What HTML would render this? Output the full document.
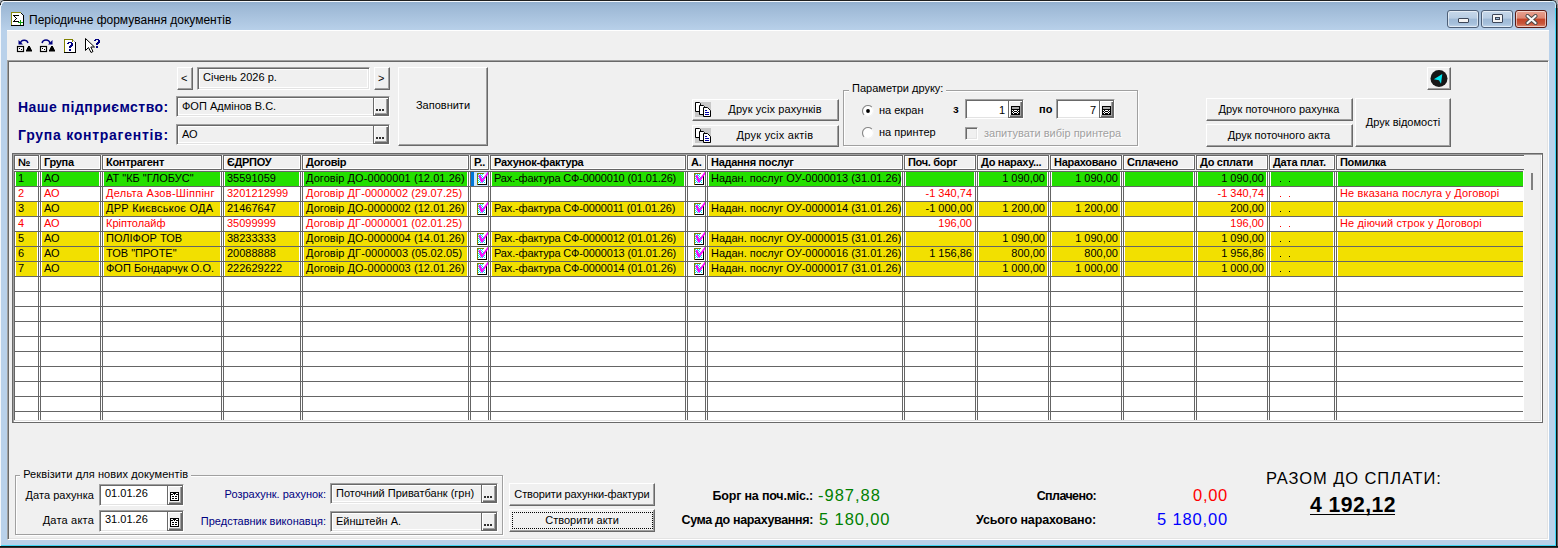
<!DOCTYPE html><html><head><meta charset="utf-8"><style>

html,body{margin:0;padding:0;}
body{width:1558px;height:548px;overflow:hidden;position:relative;background:#b9d1ea;font-family:"Liberation Sans", sans-serif;}
div{position:absolute;box-sizing:border-box;}
.t{white-space:nowrap;font-size:11px;line-height:13px;color:#000;}
svg{position:absolute;}

</style></head><body>
<div class="" style="left:0px;top:0px;width:1558px;height:548px;background:#b9d1ea"></div>
<div class="" style="left:1px;top:2px;width:1555px;height:29px;background:linear-gradient(#92afce 0%,#9db8d5 15%,#b9d1ea 100%)"></div>
<div class="" style="left:5px;top:0px;width:1547px;height:1px;background:#1f1f1f"></div>
<div class="" style="left:5px;top:1px;width:1547px;height:1px;background:#f4f7fb"></div>
<div class="" style="left:0px;top:6px;width:1px;height:540px;background:#f4f7fb"></div>
<div class="" style="left:1556px;top:8px;width:1px;height:540px;background:#101010"></div>
<div class="" style="left:1557px;top:8px;width:1px;height:540px;background:#5a5a5a"></div>
<div class="" style="left:1555px;top:8px;width:1px;height:538px;background:#3fd6f5"></div>
<div class="" style="left:0px;top:546px;width:1558px;height:1px;background:#101010"></div>
<div class="" style="left:0px;top:547px;width:1558px;height:1px;background:#303030"></div>
<div class="" style="left:1px;top:545px;width:1555px;height:1px;background:#3fd6f5"></div>
<div class="" style="left:7px;top:30px;width:1542px;height:1px;background:#ffffff"></div>
<svg style="left:0px;top:0px" width="6" height="6" viewBox="0 0 6 6"><path d="M0 0 H4 A4 4 0 0 0 0 4 Z" fill="#b4b4b4"/><path d="M0.5 5 V4 A3.5 3.5 0 0 1 4 0.5 H6" fill="none" stroke="#1f1f1f" stroke-width="1"/><path d="M1.5 6 V4.5 A3 3 0 0 1 4.5 1.5 H6" fill="none" stroke="#f4f7fb" stroke-width="1"/><path d="M1.5 6 V4.5 A3 3 0 0 1 4.5 1.5 H6" fill="none" stroke="#f4f7fb" stroke-width="1"/></svg>
<svg style="left:1550px;top:0px" width="8" height="8" viewBox="0 0 8 8"><path d="M2 0 H8 V6 A6 6 0 0 0 2 0 Z" fill="#b4b4b4"/><path d="M0 0.5 H2.5 A4 4 0 0 1 6.5 4.5 V8" fill="none" stroke="#1f1f1f" stroke-width="1"/><path d="M0 1.5 H2.5 A3 3 0 0 1 5.5 4.5 V8" fill="none" stroke="#c8eefa" stroke-width="1"/><rect x="7" y="4" width="1" height="4" fill="#8a8a8a"/></svg>
<svg style="left:11px;top:12px" width="13" height="14" viewBox="0 0 13 14" shape-rendering="crispEdges">
<path d="M1 1 H9 L12 4 V13 H1 Z" fill="#fff"/>
<rect x="0" y="0" width="1" height="14" fill="#8a8a10"/><rect x="0" y="0" width="10" height="1" fill="#8a8a10"/>
<rect x="12" y="3" width="1" height="11" fill="#000"/><rect x="0" y="13" width="13" height="1" fill="#000"/>
<rect x="9" y="0" width="1" height="1" fill="#8a8a10"/><rect x="10" y="1" width="1" height="1" fill="#000"/><rect x="11" y="2" width="1" height="1" fill="#000"/>
<path d="M2 3h6v1h-4v1h1v1h1v1h-1v1h-1v1h4v1h-6v-1h1v-1h1v-1h1v-1h-1v-1h-1v-1h-1z" fill="#000"/>
<path d="M9 8h1v2h2v1h-2v2h-1v-2h-2v-1h2z" fill="#10a010"/>
</svg>
<div class="t" style="left:29px;top:13px;font-size:12px;line-height:15px;color:#000">Періодичне формування документів</div>
<div style="left:1447px;top:10px;width:32px;height:18px;border:1px solid #4d5f77;border-radius:3px;background:linear-gradient(#c6d8ea 0%,#b8cde3 45%,#9eb9d6 50%,#a6c0db 80%,#c0d6ec 100%);box-shadow:inset 0 0 0 1px rgba(255,255,255,0.55)"><div style="left:10px;top:7px;width:11px;height:5px;background:#f4f4f4;border:1px solid #3c4658;border-radius:1px"></div></div>
<div style="left:1481px;top:10px;width:32px;height:18px;border:1px solid #4d5f77;border-radius:3px;background:linear-gradient(#c6d8ea 0%,#b8cde3 45%,#9eb9d6 50%,#a6c0db 80%,#c0d6ec 100%);box-shadow:inset 0 0 0 1px rgba(255,255,255,0.55)"><div style="left:10px;top:3px;width:11px;height:9px;background:#f4f4f4;border:1px solid #3c4658;border-radius:1px"><div style="left:2px;top:2px;width:5px;height:3px;background:#9eb9d6;border:1px solid #3c4658"></div></div></div>
<div style="left:1515px;top:10px;width:32px;height:18px;border:1px solid #5a1a14;border-radius:3px;background:linear-gradient(#e8a291 0%,#dd8672 45%,#c44428 50%,#c8573c 80%,#e0907a 100%);box-shadow:inset 0 0 0 1px rgba(255,255,255,0.55)"><svg style="left:9px;top:3px" width="13" height="11" viewBox="0 0 13 11"><path d="M2.5 2 L10.5 9 M10.5 2 L2.5 9" stroke="#474747" stroke-width="4" stroke-linecap="round"/><path d="M2.5 2 L10.5 9 M10.5 2 L2.5 9" stroke="#f8f8f8" stroke-width="2.2" stroke-linecap="round"/></svg></div>
<div class="" style="left:7px;top:31px;width:1542px;height:509px;background:#f0f0f0"></div>
<svg style="left:16px;top:38px" width="18" height="16" viewBox="0 0 18 16">
<rect x="1.5" y="8.5" width="6" height="5" fill="#fff" stroke="#000" stroke-width="1.2"/>
<rect x="3" y="10" width="1" height="1" fill="#000"/><rect x="5" y="11" width="1" height="1" fill="#000"/>
<path d="M12 8 h2 v1.5 h1 v2 h1 v2 h-6 v-2 h1 v-2 h1 z" fill="#000"/>
<path d="M4.5 5 C5 1.5 11 1 12 5" fill="none" stroke="#000080" stroke-width="1.4"/>
<path d="M2.5 2 L2.5 6.5 L7 6.5 Z" fill="#000080"/>
</svg>
<svg style="left:39px;top:38px" width="18" height="16" viewBox="0 0 18 16">
<rect x="1.5" y="8.5" width="6" height="5" fill="#fff" stroke="#000" stroke-width="1.2"/>
<rect x="3" y="10" width="1" height="1" fill="#000"/><rect x="5" y="11" width="1" height="1" fill="#000"/>
<path d="M12 8 h2 v1.5 h1 v2 h1 v2 h-6 v-2 h1 v-2 h1 z" fill="#000"/>
<path d="M3 5 C4 1 10 1 11 5" fill="none" stroke="#000080" stroke-width="1.4"/>
<path d="M13.5 2 L13.5 6.5 L9 6.5 Z" fill="#000080"/>
</svg>
<svg style="left:63px;top:39px" width="14" height="15" viewBox="0 0 14 15" shape-rendering="crispEdges">
<path d="M1 1 H9 L12 4 V13 H1 Z" fill="#fff"/>
<rect x="1" y="0" width="1" height="14" fill="#808000"/><rect x="1" y="0" width="9" height="1" fill="#808000"/><rect x="9" y="0" width="1" height="3" fill="#808000"/>
<rect x="12" y="3" width="1" height="11" fill="#000"/><rect x="1" y="13" width="12" height="1" fill="#000"/>
<rect x="10" y="1" width="1" height="1" fill="#a0a0a0"/><rect x="11" y="2" width="1" height="1" fill="#a0a0a0"/>
<path transform="translate(4,3)" d="M1 0h4v1h1v3h-1v1h-1v1h-2v-2h1v-1h1v-2h-2v1h-2v-1h1zM2 7h2v2h-2z" fill="#000080"/>
</svg>
<svg style="left:85px;top:38px" width="17" height="16" viewBox="0 0 17 16" shape-rendering="crispEdges">
<path d="M0.5 0.5 V12.5 L3.5 9.5 L6 14.5 L8 13.5 L5.8 9 L9.5 9 Z" fill="#fff" stroke="#000" stroke-width="1" shape-rendering="geometricPrecision"/>
<path transform="translate(9,1)" d="M1 0h4v1h1v3h-1v1h-1v1h-2v-2h1v-1h1v-2h-2v1h-2v-1h1zM2 7h2v2h-2z" fill="#000080"/>
</svg>
<div class="" style="left:7px;top:60px;width:1542px;height:480px;background:#f0f0f0;border-top:1px solid #a0a0a0;border-left:1px solid #a0a0a0;border-right:1px solid #ffffff;border-bottom:1px solid #ffffff;box-shadow:inset 1px 1px 0 #696969, inset -1px -1px 0 #e3e3e3"></div>
<div class="" style="left:177px;top:67px;width:16px;height:23px;background:#f0f0f0;border-top:1px solid #ffffff;border-left:1px solid #ffffff;border-right:1px solid #696969;border-bottom:1px solid #696969;box-shadow:inset -1px -1px 0 #a0a0a0;"></div>
<div class="t" style="left:181px;top:72px;font-size:11px">&lt;</div>
<div class="" style="left:197px;top:67px;width:173px;height:23px;background:#f0f0f0;border-top:1px solid #a0a0a0;border-left:1px solid #a0a0a0;border-right:1px solid #ffffff;border-bottom:1px solid #ffffff;box-shadow:inset 1px 1px 0 #696969, inset -1px -1px 0 #e3e3e3, inset 2px 2px 0 #fff, inset -2px -2px 0 #fff;"></div>
<div class="t" style="left:203px;top:71px;">Січень 2026 р.</div>
<div class="" style="left:374px;top:67px;width:16px;height:23px;background:#f0f0f0;border-top:1px solid #ffffff;border-left:1px solid #ffffff;border-right:1px solid #696969;border-bottom:1px solid #696969;box-shadow:inset -1px -1px 0 #a0a0a0;"></div>
<div class="t" style="left:378px;top:72px;font-size:11px">&gt;</div>
<div class="" style="left:176px;top:96px;width:214px;height:21px;background:#f0f0f0;border-top:1px solid #a0a0a0;border-left:1px solid #a0a0a0;border-right:1px solid #ffffff;border-bottom:1px solid #ffffff;box-shadow:inset 1px 1px 0 #696969, inset -1px -1px 0 #e3e3e3, inset 2px 2px 0 #fff, inset -2px -2px 0 #fff;"></div><div class="t" style="left:182px;top:100px;">ФОП Адмінов В.С.</div><div class="" style="left:373px;top:97px;width:16px;height:19px;background:#f0f0f0;border:1px solid #696969;box-shadow:inset 1px 1px 0 #fff, inset -1px -1px 0 #696969, inset -2px -2px 0 #a0a0a0"></div><div class="" style="left:376px;top:109px;width:2px;height:2px;background:#303030"></div><div class="" style="left:379px;top:109px;width:2px;height:2px;background:#303030"></div><div class="" style="left:382px;top:109px;width:2px;height:2px;background:#303030"></div>
<div class="" style="left:176px;top:124px;width:214px;height:21px;background:#f0f0f0;border-top:1px solid #a0a0a0;border-left:1px solid #a0a0a0;border-right:1px solid #ffffff;border-bottom:1px solid #ffffff;box-shadow:inset 1px 1px 0 #696969, inset -1px -1px 0 #e3e3e3, inset 2px 2px 0 #fff, inset -2px -2px 0 #fff;"></div><div class="t" style="left:182px;top:128px;">АО</div><div class="" style="left:373px;top:125px;width:16px;height:19px;background:#f0f0f0;border:1px solid #696969;box-shadow:inset 1px 1px 0 #fff, inset -1px -1px 0 #696969, inset -2px -2px 0 #a0a0a0"></div><div class="" style="left:376px;top:137px;width:2px;height:2px;background:#303030"></div><div class="" style="left:379px;top:137px;width:2px;height:2px;background:#303030"></div><div class="" style="left:382px;top:137px;width:2px;height:2px;background:#303030"></div>
<div class="" style="left:398px;top:67px;width:90px;height:79px;background:#f0f0f0;border-top:1px solid #ffffff;border-left:1px solid #ffffff;border-right:1px solid #696969;border-bottom:1px solid #696969;box-shadow:inset -1px -1px 0 #a0a0a0;"></div>
<div class="t" style="left:398px;top:99px;width:90px;text-align:center">Заповнити</div>
<div class="t" style="left:18px;top:99px;font-size:14px;letter-spacing:0.47px;line-height:17px;font-weight:bold;color:#000080">Наше підприємство:</div>
<div class="t" style="left:18px;top:127px;font-size:14px;letter-spacing:0.74px;line-height:17px;font-weight:bold;color:#000080">Група контрагентів:</div>
<div class="" style="left:692px;top:99px;width:147px;height:22px;background:#f0f0f0;border-top:1px solid #ffffff;border-left:1px solid #ffffff;border-right:1px solid #696969;border-bottom:1px solid #696969;box-shadow:inset -1px -1px 0 #a0a0a0;"></div>
<svg style="left:695px;top:102px" width="17" height="15" viewBox="0 0 17 15">
<rect x="0" y="0" width="16" height="15" fill="#c8c8c8"/>
<path d="M0.5 0.5 H4.5 L5.5 1.5 V9.5 H0.5 Z" fill="#fff" stroke="#000"/>
<path d="M4.5 3.5 H8.5 L9.5 4.5 V12.5 H4.5 Z" fill="#fff" stroke="#000"/>
<path d="M8.5 5.5 H12.5 L15.5 8.5 V14.5 H8.5 Z" fill="#fff" stroke="#000"/>
<path d="M10 8.5 H12 M10 10.5 H14 M10 12.5 H14" stroke="#0000a0"/>
</svg>
<div class="t" style="left:692px;top:103px;width:166px;text-align:center;letter-spacing:0.12px">Друк усіх рахунків</div>
<div class="" style="left:692px;top:125px;width:147px;height:22px;background:#f0f0f0;border-top:1px solid #ffffff;border-left:1px solid #ffffff;border-right:1px solid #696969;border-bottom:1px solid #696969;box-shadow:inset -1px -1px 0 #a0a0a0;"></div>
<svg style="left:695px;top:128px" width="17" height="15" viewBox="0 0 17 15">
<rect x="0" y="0" width="16" height="15" fill="#c8c8c8"/>
<path d="M0.5 0.5 H4.5 L5.5 1.5 V9.5 H0.5 Z" fill="#fff" stroke="#000"/>
<path d="M4.5 3.5 H8.5 L9.5 4.5 V12.5 H4.5 Z" fill="#fff" stroke="#000"/>
<path d="M8.5 5.5 H12.5 L15.5 8.5 V14.5 H8.5 Z" fill="#fff" stroke="#000"/>
<path d="M10 8.5 H12 M10 10.5 H14 M10 12.5 H14" stroke="#0000a0"/>
</svg>
<div class="t" style="left:692px;top:129px;width:166px;text-align:center;letter-spacing:0.25px">Друк усіх актів</div>
<div class="" style="left:844px;top:91px;width:295px;height:56px;border:1px solid #fff"></div>
<div class="" style="left:843px;top:90px;width:295px;height:56px;border:1px solid #a0a0a0"></div>
<div class="t" style="left:849px;top:82px;background:#f0f0f0">&nbsp;Параметри друку:&nbsp;</div>
<svg style="left:862px;top:105px" width="12" height="12" viewBox="0 0 12 12"><circle cx="6" cy="6" r="5" fill="#fff"/><path d="M2.1 9.9 A5.5 5.5 0 0 1 9.9 2.1" fill="none" stroke="#8a8a8a" stroke-width="1.1"/><path d="M9.9 2.1 A5.5 5.5 0 0 1 2.1 9.9" fill="none" stroke="#f4f4f4" stroke-width="1.1"/><circle cx="6" cy="6" r="1.9" fill="#000"/></svg>
<div class="t" style="left:879px;top:104px;">на екран</div>
<svg style="left:862px;top:127px" width="12" height="12" viewBox="0 0 12 12"><circle cx="6" cy="6" r="5" fill="#fff"/><path d="M2.1 9.9 A5.5 5.5 0 0 1 9.9 2.1" fill="none" stroke="#8a8a8a" stroke-width="1.1"/><path d="M9.9 2.1 A5.5 5.5 0 0 1 2.1 9.9" fill="none" stroke="#f4f4f4" stroke-width="1.1"/></svg>
<div class="t" style="left:879px;top:126px;">на принтер</div>
<div class="t" style="left:953px;top:103px;font-weight:bold;font-size:11.5px">з</div>
<div class="t" style="left:1039px;top:103px;font-weight:bold;font-size:11px">по</div>
<div class="" style="left:965px;top:99px;width:59px;height:20px;background:#ffffff;border-top:1px solid #a0a0a0;border-left:1px solid #a0a0a0;border-right:1px solid #ffffff;border-bottom:1px solid #ffffff;box-shadow:inset 1px 1px 0 #696969, inset -1px -1px 0 #e3e3e3, inset 2px 2px 0 #fff, inset -2px -2px 0 #fff;"></div><div class="t" style="left:967px;top:104px;width:38px;text-align:right">1</div><div class="" style="left:1008px;top:100px;width:15px;height:18px;background:#f0f0f0;border:1px solid #696969;box-shadow:inset 1px 1px 0 #fff, inset -1px -1px 0 #696969, inset -2px -2px 0 #a0a0a0"></div><svg style="left:1011px;top:106px" width="9" height="9" viewBox="0 0 9 9"><rect x="0" y="0" width="9" height="9" fill="#000"/><rect x="1" y="1" width="7" height="2" fill="#a8a8a8"/><path d="M1 4h1v1h-1zM3 4h3v1h-3zM7 4h1v1h-1zM2 5h1v1h-1zM6 5h1v1h-1zM1 6h1v1h-1zM3 6h3v1h-3zM7 6h1v1h-1zM2 7h1v1h-1zM6 7h1v1h-1z" fill="#fff"/></svg>
<div class="" style="left:1056px;top:99px;width:59px;height:20px;background:#ffffff;border-top:1px solid #a0a0a0;border-left:1px solid #a0a0a0;border-right:1px solid #ffffff;border-bottom:1px solid #ffffff;box-shadow:inset 1px 1px 0 #696969, inset -1px -1px 0 #e3e3e3, inset 2px 2px 0 #fff, inset -2px -2px 0 #fff;"></div><div class="t" style="left:1058px;top:104px;width:38px;text-align:right">7</div><div class="" style="left:1099px;top:100px;width:15px;height:18px;background:#f0f0f0;border:1px solid #696969;box-shadow:inset 1px 1px 0 #fff, inset -1px -1px 0 #696969, inset -2px -2px 0 #a0a0a0"></div><svg style="left:1102px;top:106px" width="9" height="9" viewBox="0 0 9 9"><rect x="0" y="0" width="9" height="9" fill="#000"/><rect x="1" y="1" width="7" height="2" fill="#a8a8a8"/><path d="M1 4h1v1h-1zM3 4h3v1h-3zM7 4h1v1h-1zM2 5h1v1h-1zM6 5h1v1h-1zM1 6h1v1h-1zM3 6h3v1h-3zM7 6h1v1h-1zM2 7h1v1h-1zM6 7h1v1h-1z" fill="#fff"/></svg>
<div class="" style="left:965px;top:127px;width:13px;height:13px;background:#f0f0f0;border-top:1px solid #a0a0a0;border-left:1px solid #a0a0a0;border-right:1px solid #fff;border-bottom:1px solid #fff;box-shadow:inset 1px 1px 0 #696969, inset -1px -1px 0 #e3e3e3"></div>
<div class="t" style="left:984px;top:127px;color:#a0a0a0;text-shadow:1px 1px 0 #fff">запитувати вибір принтера</div>
<div class="" style="left:1427px;top:67px;width:24px;height:23px;background:#f0f0f0;border-top:1px solid #ffffff;border-left:1px solid #ffffff;border-right:1px solid #696969;border-bottom:1px solid #696969;box-shadow:inset -1px -1px 0 #a0a0a0;"></div>
<svg style="left:1430px;top:70px" width="18" height="17" viewBox="0 0 18 17"><circle cx="9" cy="8.5" r="8.5" fill="#161616"/><path d="M3.8 9.3 L12.3 4 L11 13.8 L9 10.2 Z" fill="#00e6f0"/></svg>
<div class="" style="left:1206px;top:98px;width:147px;height:23px;background:#f0f0f0;border-top:1px solid #ffffff;border-left:1px solid #ffffff;border-right:1px solid #696969;border-bottom:1px solid #696969;box-shadow:inset -1px -1px 0 #a0a0a0;"></div>
<div class="t" style="left:1206px;top:103px;width:146px;text-align:center">Друк поточного рахунка</div>
<div class="" style="left:1206px;top:124px;width:147px;height:23px;background:#f0f0f0;border-top:1px solid #ffffff;border-left:1px solid #ffffff;border-right:1px solid #696969;border-bottom:1px solid #696969;box-shadow:inset -1px -1px 0 #a0a0a0;"></div>
<div class="t" style="left:1206px;top:129px;width:146px;text-align:center">Друк поточного акта</div>
<div class="" style="left:1355px;top:98px;width:96px;height:49px;background:#f0f0f0;border-top:1px solid #ffffff;border-left:1px solid #ffffff;border-right:1px solid #696969;border-bottom:1px solid #696969;box-shadow:inset -1px -1px 0 #a0a0a0;"></div>
<div class="t" style="left:1355px;top:116px;width:96px;text-align:center">Друк відомості</div>
<div class="" style="left:12px;top:153px;width:1531px;height:270px;background:#f0f0f0;border:1px solid #696969;box-shadow:inset 1px 1px 0 #a0a0a0, inset -1px -1px 0 #fff, inset -2px -2px 0 #e3e3e3"></div>
<div class="" style="left:14px;top:171px;width:1510px;height:249px;background:#fff"></div>
<div class="" style="left:14px;top:155px;width:25px;height:15px;background:#f0f0f0;border:1px solid #656565;box-shadow:inset 1px 1px 0 #fff, inset -1px -1px 0 #fff"></div>
<div class="t" style="left:18px;top:156px;font-weight:bold;letter-spacing:-0.3px">№</div>
<div class="" style="left:40px;top:155px;width:61px;height:15px;background:#f0f0f0;border:1px solid #656565;box-shadow:inset 1px 1px 0 #fff, inset -1px -1px 0 #fff"></div>
<div class="t" style="left:44px;top:156px;font-weight:bold;letter-spacing:-0.3px">Група</div>
<div class="" style="left:102px;top:155px;width:120px;height:15px;background:#f0f0f0;border:1px solid #656565;box-shadow:inset 1px 1px 0 #fff, inset -1px -1px 0 #fff"></div>
<div class="t" style="left:106px;top:156px;font-weight:bold;letter-spacing:-0.3px">Контрагент</div>
<div class="" style="left:223px;top:155px;width:78px;height:15px;background:#f0f0f0;border:1px solid #656565;box-shadow:inset 1px 1px 0 #fff, inset -1px -1px 0 #fff"></div>
<div class="t" style="left:227px;top:156px;font-weight:bold;letter-spacing:-0.3px">ЄДРПОУ</div>
<div class="" style="left:302px;top:155px;width:167px;height:15px;background:#f0f0f0;border:1px solid #656565;box-shadow:inset 1px 1px 0 #fff, inset -1px -1px 0 #fff"></div>
<div class="t" style="left:306px;top:156px;font-weight:bold;letter-spacing:-0.3px">Договір</div>
<div class="" style="left:470px;top:155px;width:19px;height:15px;background:#f0f0f0;border:1px solid #656565;box-shadow:inset 1px 1px 0 #fff, inset -1px -1px 0 #fff"></div>
<div class="t" style="left:474px;top:156px;font-weight:bold;letter-spacing:-0.3px">Р..</div>
<div class="" style="left:490px;top:155px;width:196px;height:15px;background:#f0f0f0;border:1px solid #656565;box-shadow:inset 1px 1px 0 #fff, inset -1px -1px 0 #fff"></div>
<div class="t" style="left:494px;top:156px;font-weight:bold;letter-spacing:-0.3px">Рахунок-фактура</div>
<div class="" style="left:687px;top:155px;width:19px;height:15px;background:#f0f0f0;border:1px solid #656565;box-shadow:inset 1px 1px 0 #fff, inset -1px -1px 0 #fff"></div>
<div class="t" style="left:691px;top:156px;font-weight:bold;letter-spacing:-0.3px">А.</div>
<div class="" style="left:707px;top:155px;width:196px;height:15px;background:#f0f0f0;border:1px solid #656565;box-shadow:inset 1px 1px 0 #fff, inset -1px -1px 0 #fff"></div>
<div class="t" style="left:711px;top:156px;font-weight:bold;letter-spacing:-0.3px">Надання послуг</div>
<div class="" style="left:904px;top:155px;width:72px;height:15px;background:#f0f0f0;border:1px solid #656565;box-shadow:inset 1px 1px 0 #fff, inset -1px -1px 0 #fff"></div>
<div class="t" style="left:908px;top:156px;font-weight:bold;letter-spacing:-0.3px">Поч. борг</div>
<div class="" style="left:977px;top:155px;width:72px;height:15px;background:#f0f0f0;border:1px solid #656565;box-shadow:inset 1px 1px 0 #fff, inset -1px -1px 0 #fff"></div>
<div class="t" style="left:981px;top:156px;font-weight:bold;letter-spacing:-0.3px">До нараху...</div>
<div class="" style="left:1050px;top:155px;width:72px;height:15px;background:#f0f0f0;border:1px solid #656565;box-shadow:inset 1px 1px 0 #fff, inset -1px -1px 0 #fff"></div>
<div class="t" style="left:1054px;top:156px;font-weight:bold;letter-spacing:-0.3px">Нараховано</div>
<div class="" style="left:1123px;top:155px;width:72px;height:15px;background:#f0f0f0;border:1px solid #656565;box-shadow:inset 1px 1px 0 #fff, inset -1px -1px 0 #fff"></div>
<div class="t" style="left:1127px;top:156px;font-weight:bold;letter-spacing:-0.3px">Сплачено</div>
<div class="" style="left:1196px;top:155px;width:72px;height:15px;background:#f0f0f0;border:1px solid #656565;box-shadow:inset 1px 1px 0 #fff, inset -1px -1px 0 #fff"></div>
<div class="t" style="left:1200px;top:156px;font-weight:bold;letter-spacing:-0.3px">До сплати</div>
<div class="" style="left:1269px;top:155px;width:66px;height:15px;background:#f0f0f0;border:1px solid #656565;box-shadow:inset 1px 1px 0 #fff, inset -1px -1px 0 #fff"></div>
<div class="t" style="left:1273px;top:156px;font-weight:bold;letter-spacing:-0.3px">Дата плат.</div>
<div class="" style="left:1336px;top:155px;width:188px;height:15px;background:#f0f0f0;border-left:1px solid #656565;border-top:1px solid #656565;box-shadow:inset 1px 1px 0 #fff"></div>
<div class="t" style="left:1340px;top:156px;font-weight:bold;letter-spacing:-0.3px">Помилка</div>
<div class="" style="left:1336px;top:169px;width:188px;height:1px;background:#656565"></div>
<div class="" style="left:16px;top:172px;width:21px;height:14px;background:#24e000"></div>
<div class="t" style="left:18px;top:172px;color:#000">1</div>
<div class="" style="left:42px;top:172px;width:57px;height:14px;background:#24e000"></div>
<div class="t" style="left:44px;top:172px;color:#000">АО</div>
<div class="" style="left:104px;top:172px;width:116px;height:14px;background:#24e000"></div>
<div class="t" style="left:106px;top:172px;color:#000">АТ "КБ "ГЛОБУС"</div>
<div class="" style="left:225px;top:172px;width:74px;height:14px;background:#24e000"></div>
<div class="t" style="left:227px;top:172px;color:#000">35591059</div>
<div class="" style="left:304px;top:172px;width:163px;height:14px;background:#24e000"></div>
<div class="t" style="left:306px;top:172px;letter-spacing:0.07px;color:#000">Договір ДО-0000001 (12.01.26)</div>
<div class="" style="left:471px;top:172px;width:17px;height:14px;background:#cce8ff"></div>
<div class="" style="left:471px;top:172px;width:3px;height:14px;background:#0078d7"></div>
<svg style="left:477px;top:172px" width="12" height="13" viewBox="0 0 12 13" shape-rendering="crispEdges">
<rect x="1" y="2" width="8" height="10" fill="#fff"/>
<path d="M1 2h1v1h-1zM3 2h1v1h-1zM5 2h1v1h-1zM2 3h1v1h-1zM4 3h1v1h-1zM1 4h1v1h-1zM3 4h1v1h-1zM5 4h1v1h-1zM2 5h1v1h-1zM4 5h1v1h-1zM6 5h1v1h-1zM1 6h1v1h-1zM3 6h1v1h-1zM5 6h1v1h-1zM7 6h1v1h-1zM2 7h1v1h-1zM4 7h1v1h-1zM6 7h1v1h-1zM1 8h1v1h-1zM3 8h1v1h-1zM5 8h1v1h-1zM7 8h1v1h-1zM2 9h1v1h-1zM6 9h1v1h-1zM1 10h1v1h-1zM3 10h1v1h-1zM5 10h1v1h-1zM7 10h1v1h-1z" fill="#00e6f0"/>
<rect x="0" y="1" width="1" height="12" fill="#808000"/><rect x="0" y="1" width="7" height="1" fill="#808000"/>
<rect x="9" y="3" width="1" height="10" fill="#000"/><rect x="1" y="12" width="9" height="1" fill="#000"/>
<path d="M1.3 3.6 L3.6 3 L5.2 7.6 L10.6 0 L11.8 1 L5.4 10.6 L4.1 10.6 Z" fill="#ff00ff" shape-rendering="geometricPrecision"/>
</svg>
<div class="" style="left:492px;top:172px;width:192px;height:14px;background:#24e000"></div>
<div class="t" style="left:494px;top:172px;letter-spacing:-0.15px;color:#000">Рах.-фактура СФ-0000010 (01.01.26)</div>
<svg style="left:694px;top:172px" width="12" height="13" viewBox="0 0 12 13" shape-rendering="crispEdges">
<rect x="1" y="2" width="8" height="10" fill="#fff"/>
<path d="M1 2h1v1h-1zM3 2h1v1h-1zM5 2h1v1h-1zM2 3h1v1h-1zM4 3h1v1h-1zM1 4h1v1h-1zM3 4h1v1h-1zM5 4h1v1h-1zM2 5h1v1h-1zM4 5h1v1h-1zM6 5h1v1h-1zM1 6h1v1h-1zM3 6h1v1h-1zM5 6h1v1h-1zM7 6h1v1h-1zM2 7h1v1h-1zM4 7h1v1h-1zM6 7h1v1h-1zM1 8h1v1h-1zM3 8h1v1h-1zM5 8h1v1h-1zM7 8h1v1h-1zM2 9h1v1h-1zM6 9h1v1h-1zM1 10h1v1h-1zM3 10h1v1h-1zM5 10h1v1h-1zM7 10h1v1h-1z" fill="#00e6f0"/>
<rect x="0" y="1" width="1" height="12" fill="#808000"/><rect x="0" y="1" width="7" height="1" fill="#808000"/>
<rect x="9" y="3" width="1" height="10" fill="#000"/><rect x="1" y="12" width="9" height="1" fill="#000"/>
<path d="M1.3 3.6 L3.6 3 L5.2 7.6 L10.6 0 L11.8 1 L5.4 10.6 L4.1 10.6 Z" fill="#ff00ff" shape-rendering="geometricPrecision"/>
</svg>
<div class="" style="left:709px;top:172px;width:192px;height:14px;background:#24e000"></div>
<div class="t" style="left:711px;top:172px;color:#000">Надан. послуг ОУ-0000013 (31.01.26)</div>
<div class="" style="left:906px;top:172px;width:68px;height:14px;background:#24e000"></div>
<div class="" style="left:979px;top:172px;width:68px;height:14px;background:#24e000"></div>
<div class="t" style="left:979px;top:172px;width:66px;text-align:right;color:#000">1 090,00</div>
<div class="" style="left:1052px;top:172px;width:68px;height:14px;background:#24e000"></div>
<div class="t" style="left:1052px;top:172px;width:66px;text-align:right;color:#000">1 090,00</div>
<div class="" style="left:1125px;top:172px;width:68px;height:14px;background:#24e000"></div>
<div class="" style="left:1198px;top:172px;width:68px;height:14px;background:#24e000"></div>
<div class="t" style="left:1198px;top:172px;width:66px;text-align:right;color:#000">1 090,00</div>
<div class="" style="left:1271px;top:172px;width:62px;height:14px;background:#24e000"></div>
<div class="" style="left:1280px;top:181px;width:1px;height:1px;background:#000"></div>
<div class="" style="left:1289px;top:181px;width:1px;height:1px;background:#000"></div>
<div class="" style="left:1338px;top:172px;width:185px;height:14px;background:#24e000"></div>
<div class="t" style="left:18px;top:187px;color:#ff0000">2</div>
<div class="t" style="left:44px;top:187px;color:#ff0000">АО</div>
<div class="t" style="left:106px;top:187px;letter-spacing:0.28px;color:#ff0000">Дельта Азов-Шіппінг</div>
<div class="t" style="left:227px;top:187px;color:#ff0000">3201212999</div>
<div class="t" style="left:306px;top:187px;letter-spacing:0.07px;color:#ff0000">Договір ДГ-0000002 (29.07.25)</div>
<div class="t" style="left:906px;top:187px;width:66px;text-align:right;color:#ff0000">-1 340,74</div>
<div class="t" style="left:1198px;top:187px;width:66px;text-align:right;color:#ff0000">-1 340,74</div>
<div class="" style="left:1280px;top:196px;width:1px;height:1px;background:#ff0000"></div>
<div class="" style="left:1289px;top:196px;width:1px;height:1px;background:#ff0000"></div>
<div class="t" style="left:1340px;top:187px;letter-spacing:0.14px;color:#ff0000">Не вказана послуга у Договорі</div>
<div class="" style="left:16px;top:202px;width:21px;height:14px;background:#f2e000"></div>
<div class="t" style="left:18px;top:202px;color:#000">3</div>
<div class="" style="left:42px;top:202px;width:57px;height:14px;background:#f2e000"></div>
<div class="t" style="left:44px;top:202px;color:#000">АО</div>
<div class="" style="left:104px;top:202px;width:116px;height:14px;background:#f2e000"></div>
<div class="t" style="left:106px;top:202px;letter-spacing:0.25px;color:#000">ДРР Києвськоє ОДА</div>
<div class="" style="left:225px;top:202px;width:74px;height:14px;background:#f2e000"></div>
<div class="t" style="left:227px;top:202px;color:#000">21467647</div>
<div class="" style="left:304px;top:202px;width:163px;height:14px;background:#f2e000"></div>
<div class="t" style="left:306px;top:202px;letter-spacing:0.07px;color:#000">Договір ДО-0000002 (12.01.26)</div>
<svg style="left:477px;top:202px" width="12" height="13" viewBox="0 0 12 13" shape-rendering="crispEdges">
<rect x="1" y="2" width="8" height="10" fill="#fff"/>
<path d="M1 2h1v1h-1zM3 2h1v1h-1zM5 2h1v1h-1zM2 3h1v1h-1zM4 3h1v1h-1zM1 4h1v1h-1zM3 4h1v1h-1zM5 4h1v1h-1zM2 5h1v1h-1zM4 5h1v1h-1zM6 5h1v1h-1zM1 6h1v1h-1zM3 6h1v1h-1zM5 6h1v1h-1zM7 6h1v1h-1zM2 7h1v1h-1zM4 7h1v1h-1zM6 7h1v1h-1zM1 8h1v1h-1zM3 8h1v1h-1zM5 8h1v1h-1zM7 8h1v1h-1zM2 9h1v1h-1zM6 9h1v1h-1zM1 10h1v1h-1zM3 10h1v1h-1zM5 10h1v1h-1zM7 10h1v1h-1z" fill="#00e6f0"/>
<rect x="0" y="1" width="1" height="12" fill="#808000"/><rect x="0" y="1" width="7" height="1" fill="#808000"/>
<rect x="9" y="3" width="1" height="10" fill="#000"/><rect x="1" y="12" width="9" height="1" fill="#000"/>
<path d="M1.3 3.6 L3.6 3 L5.2 7.6 L10.6 0 L11.8 1 L5.4 10.6 L4.1 10.6 Z" fill="#ff00ff" shape-rendering="geometricPrecision"/>
</svg>
<div class="" style="left:492px;top:202px;width:192px;height:14px;background:#f2e000"></div>
<div class="t" style="left:494px;top:202px;letter-spacing:-0.15px;color:#000">Рах.-фактура СФ-0000011 (01.01.26)</div>
<svg style="left:694px;top:202px" width="12" height="13" viewBox="0 0 12 13" shape-rendering="crispEdges">
<rect x="1" y="2" width="8" height="10" fill="#fff"/>
<path d="M1 2h1v1h-1zM3 2h1v1h-1zM5 2h1v1h-1zM2 3h1v1h-1zM4 3h1v1h-1zM1 4h1v1h-1zM3 4h1v1h-1zM5 4h1v1h-1zM2 5h1v1h-1zM4 5h1v1h-1zM6 5h1v1h-1zM1 6h1v1h-1zM3 6h1v1h-1zM5 6h1v1h-1zM7 6h1v1h-1zM2 7h1v1h-1zM4 7h1v1h-1zM6 7h1v1h-1zM1 8h1v1h-1zM3 8h1v1h-1zM5 8h1v1h-1zM7 8h1v1h-1zM2 9h1v1h-1zM6 9h1v1h-1zM1 10h1v1h-1zM3 10h1v1h-1zM5 10h1v1h-1zM7 10h1v1h-1z" fill="#00e6f0"/>
<rect x="0" y="1" width="1" height="12" fill="#808000"/><rect x="0" y="1" width="7" height="1" fill="#808000"/>
<rect x="9" y="3" width="1" height="10" fill="#000"/><rect x="1" y="12" width="9" height="1" fill="#000"/>
<path d="M1.3 3.6 L3.6 3 L5.2 7.6 L10.6 0 L11.8 1 L5.4 10.6 L4.1 10.6 Z" fill="#ff00ff" shape-rendering="geometricPrecision"/>
</svg>
<div class="" style="left:709px;top:202px;width:192px;height:14px;background:#f2e000"></div>
<div class="t" style="left:711px;top:202px;color:#000">Надан. послуг ОУ-0000014 (31.01.26)</div>
<div class="" style="left:906px;top:202px;width:68px;height:14px;background:#f2e000"></div>
<div class="t" style="left:906px;top:202px;width:66px;text-align:right;color:#000">-1 000,00</div>
<div class="" style="left:979px;top:202px;width:68px;height:14px;background:#f2e000"></div>
<div class="t" style="left:979px;top:202px;width:66px;text-align:right;color:#000">1 200,00</div>
<div class="" style="left:1052px;top:202px;width:68px;height:14px;background:#f2e000"></div>
<div class="t" style="left:1052px;top:202px;width:66px;text-align:right;color:#000">1 200,00</div>
<div class="" style="left:1125px;top:202px;width:68px;height:14px;background:#f2e000"></div>
<div class="" style="left:1198px;top:202px;width:68px;height:14px;background:#f2e000"></div>
<div class="t" style="left:1198px;top:202px;width:66px;text-align:right;color:#000">200,00</div>
<div class="" style="left:1271px;top:202px;width:62px;height:14px;background:#f2e000"></div>
<div class="" style="left:1280px;top:211px;width:1px;height:1px;background:#000"></div>
<div class="" style="left:1289px;top:211px;width:1px;height:1px;background:#000"></div>
<div class="" style="left:1338px;top:202px;width:185px;height:14px;background:#f2e000"></div>
<div class="t" style="left:18px;top:217px;color:#ff0000">4</div>
<div class="t" style="left:44px;top:217px;color:#ff0000">АО</div>
<div class="t" style="left:106px;top:217px;color:#ff0000">Кріптолайф</div>
<div class="t" style="left:227px;top:217px;color:#ff0000">35099999</div>
<div class="t" style="left:306px;top:217px;letter-spacing:0.07px;color:#ff0000">Договір ДГ-0000001 (02.01.25)</div>
<div class="t" style="left:906px;top:217px;width:66px;text-align:right;color:#ff0000">196,00</div>
<div class="t" style="left:1198px;top:217px;width:66px;text-align:right;color:#ff0000">196,00</div>
<div class="" style="left:1280px;top:226px;width:1px;height:1px;background:#ff0000"></div>
<div class="" style="left:1289px;top:226px;width:1px;height:1px;background:#ff0000"></div>
<div class="t" style="left:1340px;top:217px;letter-spacing:0.14px;color:#ff0000">Не діючий строк у Договорі</div>
<div class="" style="left:16px;top:232px;width:21px;height:14px;background:#f2e000"></div>
<div class="t" style="left:18px;top:232px;color:#000">5</div>
<div class="" style="left:42px;top:232px;width:57px;height:14px;background:#f2e000"></div>
<div class="t" style="left:44px;top:232px;color:#000">АО</div>
<div class="" style="left:104px;top:232px;width:116px;height:14px;background:#f2e000"></div>
<div class="t" style="left:106px;top:232px;color:#000">ПОЛІФОР ТОВ</div>
<div class="" style="left:225px;top:232px;width:74px;height:14px;background:#f2e000"></div>
<div class="t" style="left:227px;top:232px;color:#000">38233333</div>
<div class="" style="left:304px;top:232px;width:163px;height:14px;background:#f2e000"></div>
<div class="t" style="left:306px;top:232px;letter-spacing:0.07px;color:#000">Договір ДО-0000004 (14.01.26)</div>
<svg style="left:477px;top:232px" width="12" height="13" viewBox="0 0 12 13" shape-rendering="crispEdges">
<rect x="1" y="2" width="8" height="10" fill="#fff"/>
<path d="M1 2h1v1h-1zM3 2h1v1h-1zM5 2h1v1h-1zM2 3h1v1h-1zM4 3h1v1h-1zM1 4h1v1h-1zM3 4h1v1h-1zM5 4h1v1h-1zM2 5h1v1h-1zM4 5h1v1h-1zM6 5h1v1h-1zM1 6h1v1h-1zM3 6h1v1h-1zM5 6h1v1h-1zM7 6h1v1h-1zM2 7h1v1h-1zM4 7h1v1h-1zM6 7h1v1h-1zM1 8h1v1h-1zM3 8h1v1h-1zM5 8h1v1h-1zM7 8h1v1h-1zM2 9h1v1h-1zM6 9h1v1h-1zM1 10h1v1h-1zM3 10h1v1h-1zM5 10h1v1h-1zM7 10h1v1h-1z" fill="#00e6f0"/>
<rect x="0" y="1" width="1" height="12" fill="#808000"/><rect x="0" y="1" width="7" height="1" fill="#808000"/>
<rect x="9" y="3" width="1" height="10" fill="#000"/><rect x="1" y="12" width="9" height="1" fill="#000"/>
<path d="M1.3 3.6 L3.6 3 L5.2 7.6 L10.6 0 L11.8 1 L5.4 10.6 L4.1 10.6 Z" fill="#ff00ff" shape-rendering="geometricPrecision"/>
</svg>
<div class="" style="left:492px;top:232px;width:192px;height:14px;background:#f2e000"></div>
<div class="t" style="left:494px;top:232px;letter-spacing:-0.15px;color:#000">Рах.-фактура СФ-0000012 (01.01.26)</div>
<svg style="left:694px;top:232px" width="12" height="13" viewBox="0 0 12 13" shape-rendering="crispEdges">
<rect x="1" y="2" width="8" height="10" fill="#fff"/>
<path d="M1 2h1v1h-1zM3 2h1v1h-1zM5 2h1v1h-1zM2 3h1v1h-1zM4 3h1v1h-1zM1 4h1v1h-1zM3 4h1v1h-1zM5 4h1v1h-1zM2 5h1v1h-1zM4 5h1v1h-1zM6 5h1v1h-1zM1 6h1v1h-1zM3 6h1v1h-1zM5 6h1v1h-1zM7 6h1v1h-1zM2 7h1v1h-1zM4 7h1v1h-1zM6 7h1v1h-1zM1 8h1v1h-1zM3 8h1v1h-1zM5 8h1v1h-1zM7 8h1v1h-1zM2 9h1v1h-1zM6 9h1v1h-1zM1 10h1v1h-1zM3 10h1v1h-1zM5 10h1v1h-1zM7 10h1v1h-1z" fill="#00e6f0"/>
<rect x="0" y="1" width="1" height="12" fill="#808000"/><rect x="0" y="1" width="7" height="1" fill="#808000"/>
<rect x="9" y="3" width="1" height="10" fill="#000"/><rect x="1" y="12" width="9" height="1" fill="#000"/>
<path d="M1.3 3.6 L3.6 3 L5.2 7.6 L10.6 0 L11.8 1 L5.4 10.6 L4.1 10.6 Z" fill="#ff00ff" shape-rendering="geometricPrecision"/>
</svg>
<div class="" style="left:709px;top:232px;width:192px;height:14px;background:#f2e000"></div>
<div class="t" style="left:711px;top:232px;color:#000">Надан. послуг ОУ-0000015 (31.01.26)</div>
<div class="" style="left:906px;top:232px;width:68px;height:14px;background:#f2e000"></div>
<div class="" style="left:979px;top:232px;width:68px;height:14px;background:#f2e000"></div>
<div class="t" style="left:979px;top:232px;width:66px;text-align:right;color:#000">1 090,00</div>
<div class="" style="left:1052px;top:232px;width:68px;height:14px;background:#f2e000"></div>
<div class="t" style="left:1052px;top:232px;width:66px;text-align:right;color:#000">1 090,00</div>
<div class="" style="left:1125px;top:232px;width:68px;height:14px;background:#f2e000"></div>
<div class="" style="left:1198px;top:232px;width:68px;height:14px;background:#f2e000"></div>
<div class="t" style="left:1198px;top:232px;width:66px;text-align:right;color:#000">1 090,00</div>
<div class="" style="left:1271px;top:232px;width:62px;height:14px;background:#f2e000"></div>
<div class="" style="left:1280px;top:241px;width:1px;height:1px;background:#000"></div>
<div class="" style="left:1289px;top:241px;width:1px;height:1px;background:#000"></div>
<div class="" style="left:1338px;top:232px;width:185px;height:14px;background:#f2e000"></div>
<div class="" style="left:16px;top:247px;width:21px;height:14px;background:#f2e000"></div>
<div class="t" style="left:18px;top:247px;color:#000">6</div>
<div class="" style="left:42px;top:247px;width:57px;height:14px;background:#f2e000"></div>
<div class="t" style="left:44px;top:247px;color:#000">АО</div>
<div class="" style="left:104px;top:247px;width:116px;height:14px;background:#f2e000"></div>
<div class="t" style="left:106px;top:247px;color:#000">ТОВ "ПРОТЕ"</div>
<div class="" style="left:225px;top:247px;width:74px;height:14px;background:#f2e000"></div>
<div class="t" style="left:227px;top:247px;color:#000">20088888</div>
<div class="" style="left:304px;top:247px;width:163px;height:14px;background:#f2e000"></div>
<div class="t" style="left:306px;top:247px;letter-spacing:0.07px;color:#000">Договір ДГ-0000003 (05.02.05)</div>
<svg style="left:477px;top:247px" width="12" height="13" viewBox="0 0 12 13" shape-rendering="crispEdges">
<rect x="1" y="2" width="8" height="10" fill="#fff"/>
<path d="M1 2h1v1h-1zM3 2h1v1h-1zM5 2h1v1h-1zM2 3h1v1h-1zM4 3h1v1h-1zM1 4h1v1h-1zM3 4h1v1h-1zM5 4h1v1h-1zM2 5h1v1h-1zM4 5h1v1h-1zM6 5h1v1h-1zM1 6h1v1h-1zM3 6h1v1h-1zM5 6h1v1h-1zM7 6h1v1h-1zM2 7h1v1h-1zM4 7h1v1h-1zM6 7h1v1h-1zM1 8h1v1h-1zM3 8h1v1h-1zM5 8h1v1h-1zM7 8h1v1h-1zM2 9h1v1h-1zM6 9h1v1h-1zM1 10h1v1h-1zM3 10h1v1h-1zM5 10h1v1h-1zM7 10h1v1h-1z" fill="#00e6f0"/>
<rect x="0" y="1" width="1" height="12" fill="#808000"/><rect x="0" y="1" width="7" height="1" fill="#808000"/>
<rect x="9" y="3" width="1" height="10" fill="#000"/><rect x="1" y="12" width="9" height="1" fill="#000"/>
<path d="M1.3 3.6 L3.6 3 L5.2 7.6 L10.6 0 L11.8 1 L5.4 10.6 L4.1 10.6 Z" fill="#ff00ff" shape-rendering="geometricPrecision"/>
</svg>
<div class="" style="left:492px;top:247px;width:192px;height:14px;background:#f2e000"></div>
<div class="t" style="left:494px;top:247px;letter-spacing:-0.15px;color:#000">Рах.-фактура СФ-0000013 (01.01.26)</div>
<svg style="left:694px;top:247px" width="12" height="13" viewBox="0 0 12 13" shape-rendering="crispEdges">
<rect x="1" y="2" width="8" height="10" fill="#fff"/>
<path d="M1 2h1v1h-1zM3 2h1v1h-1zM5 2h1v1h-1zM2 3h1v1h-1zM4 3h1v1h-1zM1 4h1v1h-1zM3 4h1v1h-1zM5 4h1v1h-1zM2 5h1v1h-1zM4 5h1v1h-1zM6 5h1v1h-1zM1 6h1v1h-1zM3 6h1v1h-1zM5 6h1v1h-1zM7 6h1v1h-1zM2 7h1v1h-1zM4 7h1v1h-1zM6 7h1v1h-1zM1 8h1v1h-1zM3 8h1v1h-1zM5 8h1v1h-1zM7 8h1v1h-1zM2 9h1v1h-1zM6 9h1v1h-1zM1 10h1v1h-1zM3 10h1v1h-1zM5 10h1v1h-1zM7 10h1v1h-1z" fill="#00e6f0"/>
<rect x="0" y="1" width="1" height="12" fill="#808000"/><rect x="0" y="1" width="7" height="1" fill="#808000"/>
<rect x="9" y="3" width="1" height="10" fill="#000"/><rect x="1" y="12" width="9" height="1" fill="#000"/>
<path d="M1.3 3.6 L3.6 3 L5.2 7.6 L10.6 0 L11.8 1 L5.4 10.6 L4.1 10.6 Z" fill="#ff00ff" shape-rendering="geometricPrecision"/>
</svg>
<div class="" style="left:709px;top:247px;width:192px;height:14px;background:#f2e000"></div>
<div class="t" style="left:711px;top:247px;color:#000">Надан. послуг ОУ-0000016 (31.01.26)</div>
<div class="" style="left:906px;top:247px;width:68px;height:14px;background:#f2e000"></div>
<div class="t" style="left:906px;top:247px;width:66px;text-align:right;color:#000">1 156,86</div>
<div class="" style="left:979px;top:247px;width:68px;height:14px;background:#f2e000"></div>
<div class="t" style="left:979px;top:247px;width:66px;text-align:right;color:#000">800,00</div>
<div class="" style="left:1052px;top:247px;width:68px;height:14px;background:#f2e000"></div>
<div class="t" style="left:1052px;top:247px;width:66px;text-align:right;color:#000">800,00</div>
<div class="" style="left:1125px;top:247px;width:68px;height:14px;background:#f2e000"></div>
<div class="" style="left:1198px;top:247px;width:68px;height:14px;background:#f2e000"></div>
<div class="t" style="left:1198px;top:247px;width:66px;text-align:right;color:#000">1 956,86</div>
<div class="" style="left:1271px;top:247px;width:62px;height:14px;background:#f2e000"></div>
<div class="" style="left:1280px;top:256px;width:1px;height:1px;background:#000"></div>
<div class="" style="left:1289px;top:256px;width:1px;height:1px;background:#000"></div>
<div class="" style="left:1338px;top:247px;width:185px;height:14px;background:#f2e000"></div>
<div class="" style="left:16px;top:262px;width:21px;height:14px;background:#f2e000"></div>
<div class="t" style="left:18px;top:262px;color:#000">7</div>
<div class="" style="left:42px;top:262px;width:57px;height:14px;background:#f2e000"></div>
<div class="t" style="left:44px;top:262px;color:#000">АО</div>
<div class="" style="left:104px;top:262px;width:116px;height:14px;background:#f2e000"></div>
<div class="t" style="left:106px;top:262px;color:#000">ФОП Бондарчук О.О.</div>
<div class="" style="left:225px;top:262px;width:74px;height:14px;background:#f2e000"></div>
<div class="t" style="left:227px;top:262px;color:#000">222629222</div>
<div class="" style="left:304px;top:262px;width:163px;height:14px;background:#f2e000"></div>
<div class="t" style="left:306px;top:262px;letter-spacing:0.07px;color:#000">Договір ДО-0000003 (12.01.26)</div>
<svg style="left:477px;top:262px" width="12" height="13" viewBox="0 0 12 13" shape-rendering="crispEdges">
<rect x="1" y="2" width="8" height="10" fill="#fff"/>
<path d="M1 2h1v1h-1zM3 2h1v1h-1zM5 2h1v1h-1zM2 3h1v1h-1zM4 3h1v1h-1zM1 4h1v1h-1zM3 4h1v1h-1zM5 4h1v1h-1zM2 5h1v1h-1zM4 5h1v1h-1zM6 5h1v1h-1zM1 6h1v1h-1zM3 6h1v1h-1zM5 6h1v1h-1zM7 6h1v1h-1zM2 7h1v1h-1zM4 7h1v1h-1zM6 7h1v1h-1zM1 8h1v1h-1zM3 8h1v1h-1zM5 8h1v1h-1zM7 8h1v1h-1zM2 9h1v1h-1zM6 9h1v1h-1zM1 10h1v1h-1zM3 10h1v1h-1zM5 10h1v1h-1zM7 10h1v1h-1z" fill="#00e6f0"/>
<rect x="0" y="1" width="1" height="12" fill="#808000"/><rect x="0" y="1" width="7" height="1" fill="#808000"/>
<rect x="9" y="3" width="1" height="10" fill="#000"/><rect x="1" y="12" width="9" height="1" fill="#000"/>
<path d="M1.3 3.6 L3.6 3 L5.2 7.6 L10.6 0 L11.8 1 L5.4 10.6 L4.1 10.6 Z" fill="#ff00ff" shape-rendering="geometricPrecision"/>
</svg>
<div class="" style="left:492px;top:262px;width:192px;height:14px;background:#f2e000"></div>
<div class="t" style="left:494px;top:262px;letter-spacing:-0.15px;color:#000">Рах.-фактура СФ-0000014 (01.01.26)</div>
<svg style="left:694px;top:262px" width="12" height="13" viewBox="0 0 12 13" shape-rendering="crispEdges">
<rect x="1" y="2" width="8" height="10" fill="#fff"/>
<path d="M1 2h1v1h-1zM3 2h1v1h-1zM5 2h1v1h-1zM2 3h1v1h-1zM4 3h1v1h-1zM1 4h1v1h-1zM3 4h1v1h-1zM5 4h1v1h-1zM2 5h1v1h-1zM4 5h1v1h-1zM6 5h1v1h-1zM1 6h1v1h-1zM3 6h1v1h-1zM5 6h1v1h-1zM7 6h1v1h-1zM2 7h1v1h-1zM4 7h1v1h-1zM6 7h1v1h-1zM1 8h1v1h-1zM3 8h1v1h-1zM5 8h1v1h-1zM7 8h1v1h-1zM2 9h1v1h-1zM6 9h1v1h-1zM1 10h1v1h-1zM3 10h1v1h-1zM5 10h1v1h-1zM7 10h1v1h-1z" fill="#00e6f0"/>
<rect x="0" y="1" width="1" height="12" fill="#808000"/><rect x="0" y="1" width="7" height="1" fill="#808000"/>
<rect x="9" y="3" width="1" height="10" fill="#000"/><rect x="1" y="12" width="9" height="1" fill="#000"/>
<path d="M1.3 3.6 L3.6 3 L5.2 7.6 L10.6 0 L11.8 1 L5.4 10.6 L4.1 10.6 Z" fill="#ff00ff" shape-rendering="geometricPrecision"/>
</svg>
<div class="" style="left:709px;top:262px;width:192px;height:14px;background:#f2e000"></div>
<div class="t" style="left:711px;top:262px;color:#000">Надан. послуг ОУ-0000017 (31.01.26)</div>
<div class="" style="left:906px;top:262px;width:68px;height:14px;background:#f2e000"></div>
<div class="" style="left:979px;top:262px;width:68px;height:14px;background:#f2e000"></div>
<div class="t" style="left:979px;top:262px;width:66px;text-align:right;color:#000">1 000,00</div>
<div class="" style="left:1052px;top:262px;width:68px;height:14px;background:#f2e000"></div>
<div class="t" style="left:1052px;top:262px;width:66px;text-align:right;color:#000">1 000,00</div>
<div class="" style="left:1125px;top:262px;width:68px;height:14px;background:#f2e000"></div>
<div class="" style="left:1198px;top:262px;width:68px;height:14px;background:#f2e000"></div>
<div class="t" style="left:1198px;top:262px;width:66px;text-align:right;color:#000">1 000,00</div>
<div class="" style="left:1271px;top:262px;width:62px;height:14px;background:#f2e000"></div>
<div class="" style="left:1280px;top:271px;width:1px;height:1px;background:#000"></div>
<div class="" style="left:1289px;top:271px;width:1px;height:1px;background:#000"></div>
<div class="" style="left:1338px;top:262px;width:185px;height:14px;background:#f2e000"></div>
<div class="" style="left:14px;top:171px;width:1509px;height:1px;background:#656565"></div>
<div class="" style="left:14px;top:186px;width:1509px;height:1px;background:#656565"></div>
<div class="" style="left:14px;top:201px;width:1509px;height:1px;background:#656565"></div>
<div class="" style="left:14px;top:216px;width:1509px;height:1px;background:#656565"></div>
<div class="" style="left:14px;top:231px;width:1509px;height:1px;background:#656565"></div>
<div class="" style="left:14px;top:246px;width:1509px;height:1px;background:#656565"></div>
<div class="" style="left:14px;top:261px;width:1509px;height:1px;background:#656565"></div>
<div class="" style="left:14px;top:276px;width:1509px;height:1px;background:#656565"></div>
<div class="" style="left:14px;top:291px;width:1509px;height:1px;background:#656565"></div>
<div class="" style="left:14px;top:306px;width:1509px;height:1px;background:#656565"></div>
<div class="" style="left:14px;top:321px;width:1509px;height:1px;background:#656565"></div>
<div class="" style="left:14px;top:336px;width:1509px;height:1px;background:#656565"></div>
<div class="" style="left:14px;top:351px;width:1509px;height:1px;background:#656565"></div>
<div class="" style="left:14px;top:366px;width:1509px;height:1px;background:#656565"></div>
<div class="" style="left:14px;top:381px;width:1509px;height:1px;background:#656565"></div>
<div class="" style="left:14px;top:396px;width:1509px;height:1px;background:#656565"></div>
<div class="" style="left:14px;top:411px;width:1509px;height:1px;background:#656565"></div>
<div class="" style="left:14px;top:171px;width:1px;height:249px;background:#656565"></div>
<div class="" style="left:38px;top:171px;width:1px;height:249px;background:#656565"></div>
<div class="" style="left:40px;top:171px;width:1px;height:249px;background:#656565"></div>
<div class="" style="left:100px;top:171px;width:1px;height:249px;background:#656565"></div>
<div class="" style="left:102px;top:171px;width:1px;height:249px;background:#656565"></div>
<div class="" style="left:221px;top:171px;width:1px;height:249px;background:#656565"></div>
<div class="" style="left:223px;top:171px;width:1px;height:249px;background:#656565"></div>
<div class="" style="left:300px;top:171px;width:1px;height:249px;background:#656565"></div>
<div class="" style="left:302px;top:171px;width:1px;height:249px;background:#656565"></div>
<div class="" style="left:468px;top:171px;width:1px;height:249px;background:#656565"></div>
<div class="" style="left:470px;top:171px;width:1px;height:249px;background:#656565"></div>
<div class="" style="left:488px;top:171px;width:1px;height:249px;background:#656565"></div>
<div class="" style="left:490px;top:171px;width:1px;height:249px;background:#656565"></div>
<div class="" style="left:685px;top:171px;width:1px;height:249px;background:#656565"></div>
<div class="" style="left:687px;top:171px;width:1px;height:249px;background:#656565"></div>
<div class="" style="left:705px;top:171px;width:1px;height:249px;background:#656565"></div>
<div class="" style="left:707px;top:171px;width:1px;height:249px;background:#656565"></div>
<div class="" style="left:902px;top:171px;width:1px;height:249px;background:#656565"></div>
<div class="" style="left:904px;top:171px;width:1px;height:249px;background:#656565"></div>
<div class="" style="left:975px;top:171px;width:1px;height:249px;background:#656565"></div>
<div class="" style="left:977px;top:171px;width:1px;height:249px;background:#656565"></div>
<div class="" style="left:1048px;top:171px;width:1px;height:249px;background:#656565"></div>
<div class="" style="left:1050px;top:171px;width:1px;height:249px;background:#656565"></div>
<div class="" style="left:1121px;top:171px;width:1px;height:249px;background:#656565"></div>
<div class="" style="left:1123px;top:171px;width:1px;height:249px;background:#656565"></div>
<div class="" style="left:1194px;top:171px;width:1px;height:249px;background:#656565"></div>
<div class="" style="left:1196px;top:171px;width:1px;height:249px;background:#656565"></div>
<div class="" style="left:1267px;top:171px;width:1px;height:249px;background:#656565"></div>
<div class="" style="left:1269px;top:171px;width:1px;height:249px;background:#656565"></div>
<div class="" style="left:1334px;top:171px;width:1px;height:249px;background:#656565"></div>
<div class="" style="left:1336px;top:171px;width:1px;height:249px;background:#656565"></div>
<div class="" style="left:1531px;top:173px;width:2px;height:17px;background:#808080"></div>
<div class="" style="left:16px;top:476px;width:488px;height:60px;border:1px solid #fff"></div>
<div class="" style="left:15px;top:475px;width:488px;height:60px;border:1px solid #a0a0a0"></div>
<div class="t" style="left:20px;top:468px;background:#f0f0f0;letter-spacing:0.1px">&nbsp;Реквізити для нових документів&nbsp;</div>
<div class="t" style="left:-306px;top:489px;width:400px;text-align:right;letter-spacing:0.05px">Дата рахунка</div>
<div class="t" style="left:-306px;top:514px;width:400px;text-align:right;letter-spacing:0.2px">Дата акта</div>
<div class="" style="left:99px;top:484px;width:85px;height:22px;background:#ffffff;border-top:1px solid #a0a0a0;border-left:1px solid #a0a0a0;border-right:1px solid #ffffff;border-bottom:1px solid #ffffff;box-shadow:inset 1px 1px 0 #696969, inset -1px -1px 0 #e3e3e3, inset 2px 2px 0 #fff, inset -2px -2px 0 #fff;"></div><div class="t" style="left:105px;top:487px;">01.01.26</div><div class="" style="left:167px;top:485px;width:16px;height:20px;background:#f0f0f0;border:1px solid #696969;box-shadow:inset 1px 1px 0 #fff, inset -1px -1px 0 #696969, inset -2px -2px 0 #a0a0a0"></div><svg style="left:170px;top:492px" width="9" height="9" viewBox="0 0 9 9"><rect x="0" y="0" width="9" height="9" fill="#000"/><path d="M1 1h2v1h-2zM6 1h2v1h-2zM1 3h7v1h-7zM1 5h7v1h-7zM1 7h7v1h-7zM1 4h1v1h-1zM4 4h1v1h-1zM7 4h1v1h-1zM1 6h1v1h-1zM4 6h1v1h-1zM7 6h1v1h-1zM3 2h1v1h-1zM5 2h1v1h-1z" fill="#fff"/></svg>
<div class="" style="left:99px;top:510px;width:85px;height:22px;background:#ffffff;border-top:1px solid #a0a0a0;border-left:1px solid #a0a0a0;border-right:1px solid #ffffff;border-bottom:1px solid #ffffff;box-shadow:inset 1px 1px 0 #696969, inset -1px -1px 0 #e3e3e3, inset 2px 2px 0 #fff, inset -2px -2px 0 #fff;"></div><div class="t" style="left:105px;top:513px;">31.01.26</div><div class="" style="left:167px;top:511px;width:16px;height:20px;background:#f0f0f0;border:1px solid #696969;box-shadow:inset 1px 1px 0 #fff, inset -1px -1px 0 #696969, inset -2px -2px 0 #a0a0a0"></div><svg style="left:170px;top:518px" width="9" height="9" viewBox="0 0 9 9"><rect x="0" y="0" width="9" height="9" fill="#000"/><path d="M1 1h2v1h-2zM6 1h2v1h-2zM1 3h7v1h-7zM1 5h7v1h-7zM1 7h7v1h-7zM1 4h1v1h-1zM4 4h1v1h-1zM7 4h1v1h-1zM1 6h1v1h-1zM4 6h1v1h-1zM7 6h1v1h-1zM3 2h1v1h-1zM5 2h1v1h-1z" fill="#fff"/></svg>
<div class="t" style="left:-74px;top:488px;width:400px;text-align:right;color:#000080">Розрахунк. рахунок:</div>
<div class="t" style="left:-74px;top:515px;width:400px;text-align:right;color:#000080">Представник виконавця:</div>
<div class="" style="left:330px;top:483px;width:168px;height:21px;background:#f0f0f0;border-top:1px solid #a0a0a0;border-left:1px solid #a0a0a0;border-right:1px solid #ffffff;border-bottom:1px solid #ffffff;box-shadow:inset 1px 1px 0 #696969, inset -1px -1px 0 #e3e3e3, inset 2px 2px 0 #fff, inset -2px -2px 0 #fff;"></div><div class="t" style="left:336px;top:487px;">Поточний Приватбанк (грн)</div><div class="" style="left:481px;top:484px;width:16px;height:19px;background:#f0f0f0;border:1px solid #696969;box-shadow:inset 1px 1px 0 #fff, inset -1px -1px 0 #696969, inset -2px -2px 0 #a0a0a0"></div><div class="" style="left:484px;top:496px;width:2px;height:2px;background:#303030"></div><div class="" style="left:487px;top:496px;width:2px;height:2px;background:#303030"></div><div class="" style="left:490px;top:496px;width:2px;height:2px;background:#303030"></div>
<div class="" style="left:330px;top:511px;width:168px;height:21px;background:#f0f0f0;border-top:1px solid #a0a0a0;border-left:1px solid #a0a0a0;border-right:1px solid #ffffff;border-bottom:1px solid #ffffff;box-shadow:inset 1px 1px 0 #696969, inset -1px -1px 0 #e3e3e3, inset 2px 2px 0 #fff, inset -2px -2px 0 #fff;"></div><div class="t" style="left:336px;top:515px;">Ейнштейн А.</div><div class="" style="left:481px;top:512px;width:16px;height:19px;background:#f0f0f0;border:1px solid #696969;box-shadow:inset 1px 1px 0 #fff, inset -1px -1px 0 #696969, inset -2px -2px 0 #a0a0a0"></div><div class="" style="left:484px;top:524px;width:2px;height:2px;background:#303030"></div><div class="" style="left:487px;top:524px;width:2px;height:2px;background:#303030"></div><div class="" style="left:490px;top:524px;width:2px;height:2px;background:#303030"></div>
<div class="" style="left:509px;top:483px;width:146px;height:23px;background:#f0f0f0;border-top:1px solid #ffffff;border-left:1px solid #ffffff;border-right:1px solid #696969;border-bottom:1px solid #696969;box-shadow:inset -1px -1px 0 #a0a0a0;"></div>
<div class="t" style="left:509px;top:488px;width:146px;text-align:center;letter-spacing:-0.12px">Створити рахунки-фактури</div>
<div class="" style="left:509px;top:509px;width:146px;height:23px;background:#f0f0f0;border-top:1px solid #ffffff;border-left:1px solid #ffffff;border-right:1px solid #696969;border-bottom:1px solid #696969;box-shadow:inset -1px -1px 0 #a0a0a0;"></div>
<div class="" style="left:512px;top:512px;width:141px;height:17px;border:1px dotted #000"></div>
<div class="t" style="left:509px;top:514px;width:146px;text-align:center">Створити акти</div>
<div class="t" style="left:413px;top:489px;width:400px;text-align:right;font-weight:bold;font-size:12.5px;letter-spacing:-0.2px;line-height:14px">Борг на поч.міс.:</div>
<div class="t" style="left:413px;top:513px;width:400px;text-align:right;font-weight:bold;font-size:12.5px;letter-spacing:-0.35px;line-height:14px">Сума до нарахування:</div>
<div class="t" style="left:818px;top:486px;font-size:16.5px;letter-spacing:1.0px;line-height:19px;color:#008000">-987,88</div>
<div class="t" style="left:819px;top:510px;font-size:16.5px;letter-spacing:0.9px;line-height:19px;color:#008000">5 180,00</div>
<div class="t" style="left:696px;top:489px;width:400px;text-align:right;font-weight:bold;font-size:12.5px;letter-spacing:-0.6px;line-height:14px">Сплачено:</div>
<div class="t" style="left:696px;top:513px;width:400px;text-align:right;font-weight:bold;font-size:12.5px;letter-spacing:-0.15px;line-height:14px">Усього нараховано:</div>
<div class="t" style="left:828px;top:486px;width:400px;text-align:right;font-size:16.5px;letter-spacing:0.7px;line-height:19px;color:#ff0000">0,00</div>
<div class="t" style="left:828px;top:510px;width:400px;text-align:right;font-size:16.5px;letter-spacing:0.85px;line-height:19px;color:#0000ff">5 180,00</div>
<div class="t" style="left:1266px;top:469px;font-size:16.5px;line-height:19px;letter-spacing:0.92px">РАЗОМ ДО СПЛАТИ:</div>
<div class="t" style="left:1310px;top:493px;font-size:21.2px;line-height:23px;font-weight:bold;letter-spacing:0.45px">4 192,12</div>
<div class="" style="left:1310px;top:514px;width:85px;height:1px;background:#000"></div>
</body></html>
